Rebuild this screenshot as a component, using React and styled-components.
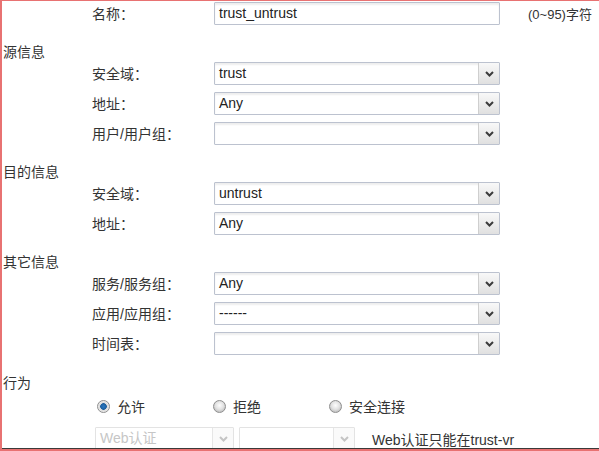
import React from 'react';
import styled, { createGlobalStyle } from 'styled-components';

const Global = createGlobalStyle`
  html, body { margin: 0; padding: 0; background: #fff; }
  body {
    font-family: "Liberation Sans", Arial, "Noto Sans CJK SC", sans-serif;
    font-size: 14px;
    color: #333;
  }
`;

const Frame = styled.div`
  width: 599px;
  height: 451px;
  box-sizing: border-box;
  border-top: 1px solid #e87272;
  border-left: 2px solid #e87272;
  border-bottom: 2px solid #e87272;
  display: flex;
  flex-direction: column;
  overflow: hidden;
`;

const Content = styled.div`
  flex: 1;
  min-height: 0;
  overflow: hidden;
  box-sizing: border-box;
  border-bottom: 1px solid #3a3a3a;
  padding: 1px 0 0 1px;
`;

const Section = styled.section`
  margin-top: ${(p) => p.$gap ?? 17}px;
`;

const Title = styled.div`
  height: 20px;
  line-height: 20px;
  white-space: nowrap;
`;

const Fields = styled.div`
  display: flex;
  flex-direction: column;
  gap: 7px;
`;

const Row = styled.div`
  display: flex;
  align-items: center;
  height: 23px;
  padding-left: 89px;
`;

const Label = styled.div`
  width: 122px;
  flex: none;
  white-space: nowrap;
  line-height: 20px;
`;

const Hint = styled.div`
  margin-left: 28px;
  font-size: 13px;
  white-space: nowrap;
`;

const Box = styled.div`
  width: ${(p) => p.$w}px;
  height: 23px;
  box-sizing: border-box;
  flex: none;
  display: flex;
  border: 1px solid ${(p) => (p.$disabled ? '#e3e3e3' : '#bcc2cf')};
  background: #fff;
  box-shadow: ${(p) => (p.$disabled ? 'none' : 'inset 0 2px 2px rgba(0,0,0,0.07)')};
  border-radius: 1px;
`;

const Value = styled.div`
  flex: 1;
  min-width: 0;
  padding-left: 4px;
  line-height: 20px;
  white-space: nowrap;
  overflow: hidden;
  color: ${(p) => (p.$disabled ? '#c6c6c6' : '#222')};
`;

const ArrowBox = styled.div`
  width: 20px;
  flex: none;
  display: flex;
  align-items: center;
  justify-content: center;
  border-left: 1px solid ${(p) => (p.$disabled ? '#e6e6e6' : '#cfcfcf')};
  background: ${(p) =>
    p.$disabled ? '#fafafa' : 'linear-gradient(#f8f8f8, #e0e0e0)'};
`;

const Chevron = ({ disabled }) => (
  <svg width="9" height="6" viewBox="0 0 9 6">
    <path
      d="M1 1 L4.5 4.5 L8 1"
      fill="none"
      stroke={disabled ? '#c4c4c4' : '#3c3c3c'}
      strokeWidth="2"
    />
  </svg>
);

const Select = ({ value, width = 286, disabled }) => (
  <Box $w={width} $disabled={disabled}>
    <Value $disabled={disabled}>{value}</Value>
    <ArrowBox $disabled={disabled}>
      <Chevron disabled={disabled} />
    </ArrowBox>
  </Box>
);

const TextInput = ({ value }) => (
  <Box $w={286}>
    <Value>{value}</Value>
  </Box>
);

const RadioRow = styled.div`
  display: flex;
  align-items: center;
  height: 26px;
  padding-left: 94px;
`;

const RadioItem = styled.label`
  width: 116px;
  flex: none;
  display: flex;
  align-items: center;
  gap: 7px;
  white-space: nowrap;
`;

const RadioDot = styled.span`
  width: 13px;
  height: 13px;
  box-sizing: border-box;
  border-radius: 50%;
  border: 1px solid #8e8e8e;
  background: ${(p) =>
    p.$on
      ? 'radial-gradient(circle, #2a78c2 0, #1d5f9e 3px, #d8d8d8 3.6px, #f2f2f2 6px)'
      : 'radial-gradient(circle at 50% 40%, #fdfdfd 0, #e2e2e2 4px, #c9c9c9 6px)'};
`;

const BottomRow = styled.div`
  display: flex;
  align-items: center;
  height: 23px;
  margin-top: 8px;
  padding-left: 92px;
  gap: 5px;
`;

const Note = styled.div`
  margin-left: 12px;
  white-space: nowrap;
`;

export default function App() {
  return (
    <>
      <Global />
      <Frame>
        <Content>
          <Row>
            <Label>名称：</Label>
            <TextInput value="trust_untrust" />
            <Hint>(0~95)字符</Hint>
          </Row>

          <Section>
            <Title>源信息</Title>
            <Fields>
              <Row>
                <Label>安全域：</Label>
                <Select value="trust" />
              </Row>
              <Row>
                <Label>地址：</Label>
                <Select value="Any" />
              </Row>
              <Row>
                <Label>用户/用户组：</Label>
                <Select value="" />
              </Row>
            </Fields>
          </Section>

          <Section>
            <Title>目的信息</Title>
            <Fields>
              <Row>
                <Label>安全域：</Label>
                <Select value="untrust" />
              </Row>
              <Row>
                <Label>地址：</Label>
                <Select value="Any" />
              </Row>
            </Fields>
          </Section>

          <Section>
            <Title>其它信息</Title>
            <Fields>
              <Row>
                <Label>服务/服务组：</Label>
                <Select value="Any" />
              </Row>
              <Row>
                <Label>应用/应用组：</Label>
                <Select value="------" />
              </Row>
              <Row>
                <Label>时间表：</Label>
                <Select value="" />
              </Row>
            </Fields>
          </Section>

          <Section $gap={18}>
            <Title>行为</Title>
            <RadioRow>
              <RadioItem>
                <RadioDot $on />
                允许
              </RadioItem>
              <RadioItem>
                <RadioDot />
                拒绝
              </RadioItem>
              <RadioItem>
                <RadioDot />
                安全连接
              </RadioItem>
            </RadioRow>
            <BottomRow>
              <Select value="Web认证" width={139} disabled />
              <Select value="" width={116} disabled />
              <Note>Web认证只能在trust-vr</Note>
            </BottomRow>
          </Section>
        </Content>
      </Frame>
    </>
  );
}
